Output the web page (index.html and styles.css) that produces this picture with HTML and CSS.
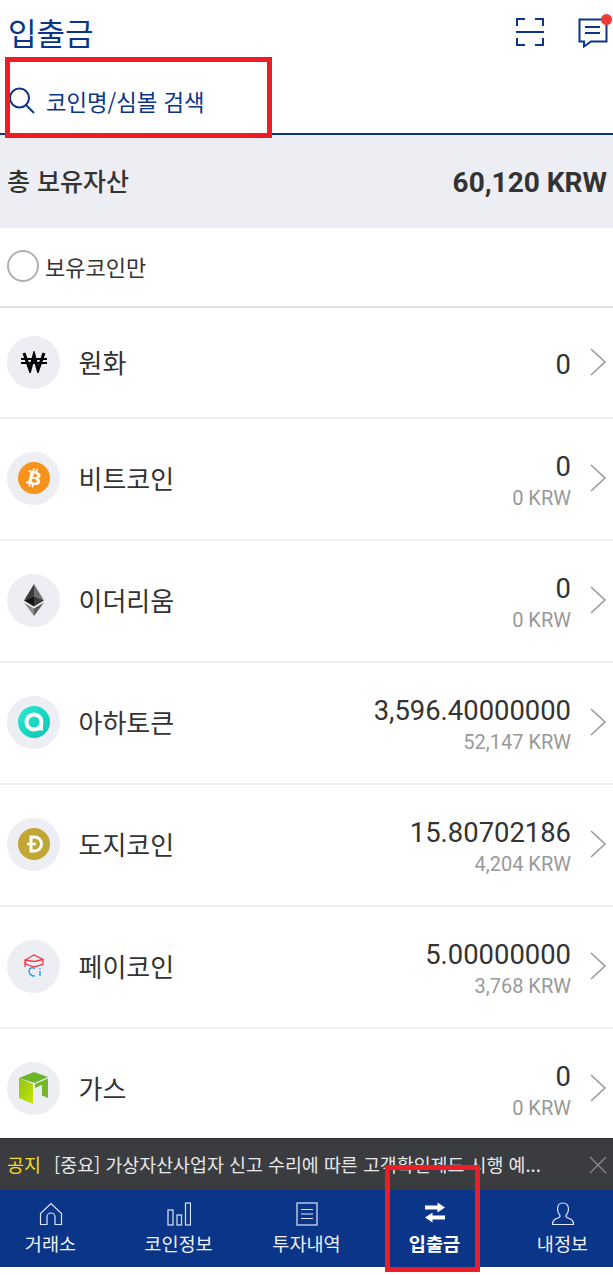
FILE: index.html
```html
<!DOCTYPE html>
<html lang="ko">
<head>
<meta charset="utf-8">
<title>입출금</title>
<link rel="stylesheet" href="styles.css">
</head>
<body>
<div class="app">
  <header class="top">
    <div class="titlebar">
      <h1 class="title">입출금</h1>
      <div class="top-icons">
        <svg class="ic-scan" width="28" height="28" viewBox="0 0 28 28" fill="none" stroke="#0a3589" stroke-width="2"><path d="M1 8V1h8M19 1h8v7M1 20v7h8M19 27h8v-7"/><path d="M0 14h28"/></svg>
        <span class="msg">
          <svg width="30" height="31" viewBox="0 0 30 31" fill="none" stroke="#0a3589" stroke-width="2"><path d="M1.500 2.500h27v22H13l-7 5v-5H1.500z"/><path d="M7 10h15M7 16h15"/></svg>
          <i class="dot"></i>
        </span>
      </div>
    </div>
    <div class="search">
      <svg width="28" height="28" viewBox="0 0 28 28" fill="none" stroke="#0a3589" stroke-width="2"><circle cx="11.500" cy="11" r="9.500"/><path d="M18 18l8 8"/></svg>
      <span class="search-text">코인명/심볼 검색</span>
    </div>
  </header>
  <section class="summary"><span class="sum-l">총 보유자산</span><span class="sum-r">60,120 KRW</span></section>
  <div class="filter"><i class="radio"></i><span>보유코인만</span></div>
  <main class="list">
    <div class="row first">
      <span class="coin"><svg width="28" height="22" viewBox="0 0 28 22" fill="none" stroke="#000" stroke-width="3"><path d="M4 2l6 17 4-15 4 15 6-17"/><path d="M1 8h26M1 12h26" stroke-width="2"/></svg></span>
      <span class="name">원화</span>
      <span class="vals"><b class="num">0</b></span>
      <svg class="chev" width="18" height="28" viewBox="0 0 18 28" fill="none" stroke="#999" stroke-width="1.600"><path d="M2 1l14 13L2 27"/></svg>
    </div>
    <div class="row">
      <span class="coin"><svg width="32" height="32" viewBox="0 0 32 32"><circle cx="16" cy="16" r="16" fill="#f7931a"/><path fill="#fff" d="M22.600 14c.3-2.100-1.300-3.200-3.400-4l.7-2.800-1.700-.4-.7 2.700-1.400-.3.700-2.700-1.700-.4-.7 2.800-3.400-.8-.5 1.800s1.300.3 1.200.3c.7.2.800.6.800 1l-1.900 7.600c-.1.200-.3.500-.8.400 0 0-1.200-.3-1.200-.3l-.9 2 3.300.8-.7 2.800 1.700.4.700-2.800 1.400.3-.7 2.800 1.700.4.700-2.800c2.900.5 5.100.3 6-2.300.7-2.100 0-3.300-1.500-4.100 1.100-.3 1.900-1 2.100-2.400zm-3.800 5.400c-.5 2.100-4 1-5.200.7l.9-3.700c1.200.3 4.800.9 4.300 3zm.5-5.400c-.5 1.900-3.400.9-4.300.7l.8-3.300c1 .2 4 .7 3.500 2.600z"/></svg></span>
      <span class="name">비트코인</span>
      <span class="vals"><b class="num">0</b><small class="krw">0 KRW</small></span>
      <svg class="chev" width="18" height="28" viewBox="0 0 18 28" fill="none" stroke="#999" stroke-width="1.600"><path d="M2 1l14 13L2 27"/></svg>
    </div>
    <div class="row">
      <span class="coin"><svg width="20" height="32" viewBox="0 0 20 32"><path fill="#3c3c3d" d="M10 0L0 16.500 10 12z"/><path fill="#6f6f70" d="M10 0l10 16.500L10 12z"/><path fill="#141414" d="M0 16.500L10 22.500V12z"/><path fill="#3c3c3d" d="M20 16.500L10 22.500V12z"/><path fill="#8c8c8d" d="M0 18.500L10 32v-7.500z"/><path fill="#5a5a5b" d="M20 18.500L10 32v-7.500z"/></svg></span>
      <span class="name">이더리움</span>
      <span class="vals"><b class="num">0</b><small class="krw">0 KRW</small></span>
      <svg class="chev" width="18" height="28" viewBox="0 0 18 28" fill="none" stroke="#999" stroke-width="1.600"><path d="M2 1l14 13L2 27"/></svg>
    </div>
    <div class="row">
      <span class="coin"><svg width="32" height="32" viewBox="0 0 32 32"><defs><linearGradient id="aha" x1="0" y1="0" x2="1" y2="1"><stop offset="0" stop-color="#2ce8d4"/><stop offset="1" stop-color="#0cc4b4"/></linearGradient></defs><circle cx="16" cy="16" r="16" fill="url(#aha)"/><circle cx="16" cy="16" r="7.500" fill="none" stroke="#fff" stroke-width="4"/><path d="M21 17h4v7.500h-4z" fill="#fff"/></svg></span>
      <span class="name">아하토큰</span>
      <span class="vals"><b class="num">3,596.40000000</b><small class="krw">52,147 KRW</small></span>
      <svg class="chev" width="18" height="28" viewBox="0 0 18 28" fill="none" stroke="#999" stroke-width="1.600"><path d="M2 1l14 13L2 27"/></svg>
    </div>
    <div class="row">
      <span class="coin"><svg width="32" height="32" viewBox="0 0 32 32"><circle cx="16" cy="16" r="16" fill="#c2a633"/><path fill="none" stroke="#fff" stroke-width="3" d="M13 9h3.500a7 7 0 010 14H13z"/><path stroke="#fff" stroke-width="2.500" d="M9 16h9"/></svg></span>
      <span class="name">도지코인</span>
      <span class="vals"><b class="num">15.80702186</b><small class="krw">4,204 KRW</small></span>
      <svg class="chev" width="18" height="28" viewBox="0 0 18 28" fill="none" stroke="#999" stroke-width="1.600"><path d="M2 1l14 13L2 27"/></svg>
    </div>
    <div class="row">
      <span class="coin"><svg width="22" height="24" viewBox="0 0 22 24" fill="none"><path stroke="#ee3b4b" stroke-width="1.300" d="M2 6l9-5 9 4.500v5l-9 2.500-8-3zM2 6v7M11 7.500L2 6M11 7.500l9-2"/><path stroke="#2a9df4" stroke-width="1.500" d="M12 14.500c-3-1.500-6-.5-6 2.500s3 5.500 6 5"/><path stroke="#2a9df4" stroke-width="1.500" d="M17 17v5"/><path stroke="#2a9df4" stroke-width="1.300" d="M17 14v1.500"/></svg></span>
      <span class="name">페이코인</span>
      <span class="vals"><b class="num">5.00000000</b><small class="krw">3,768 KRW</small></span>
      <svg class="chev" width="18" height="28" viewBox="0 0 18 28" fill="none" stroke="#999" stroke-width="1.600"><path d="M2 1l14 13L2 27"/></svg>
    </div>
    <div class="row">
      <span class="coin"><svg width="30" height="32" viewBox="0 0 30 32"><defs><linearGradient id="neo" x1="0" y1="0" x2="1" y2="1"><stop offset="0" stop-color="#8fc31f"/><stop offset="1" stop-color="#c8e400"/></linearGradient></defs><path fill="url(#neo)" d="M0 6l14 6v20L0 26z"/><path fill="#6db52a" d="M0 6L15 0l14 5-13.500 6z"/><path fill="#74b72a" d="M16 12l13-5.500V26l-6-2.500V13l-7 3z"/></svg></span>
      <span class="name">가스</span>
      <span class="vals"><b class="num">0</b><small class="krw">0 KRW</small></span>
      <svg class="chev" width="18" height="28" viewBox="0 0 18 28" fill="none" stroke="#999" stroke-width="1.600"><path d="M2 1l14 13L2 27"/></svg>
    </div>
  </main>
  <div class="notice">
    <span class="n-tag">공지</span>
    <span class="n-text">[중요] 가상자산사업자 신고 수리에 따른 고객확인제도 시행 예...</span>
    <svg width="18" height="18" viewBox="0 0 18 18" fill="none" stroke="#8a8c90" stroke-width="1.300"><path d="M1 1l16 16M17 1L1 17"/></svg>
  </div>
  <nav class="nav">
    <a class="tab"><svg width="24" height="24" viewBox="0 0 24 24" fill="none" stroke="#dfe5f3" stroke-width="1.200"><path d="M1.500 11.500L12 1.500l10.500 10V22.500H16V15a4 4 0 00-8 0v7.500H1.500z"/></svg><span>거래소</span></a>
    <a class="tab"><svg width="24" height="24" viewBox="0 0 24 24" fill="none" stroke="#dfe5f3" stroke-width="1.200"><rect x="1" y="8" width="5" height="15"/><rect x="10" y="13" width="4.500" height="10"/><rect x="18.500" y="1" width="5" height="22"/></svg><span>코인정보</span></a>
    <a class="tab"><svg width="24" height="24" viewBox="0 0 24 24" fill="none" stroke="#dfe5f3" stroke-width="1.200"><rect x="2" y="1" width="20" height="22"/><path d="M6 7.500h12M6 12h12M6 16.500h12"/></svg><span>투자내역</span></a>
    <a class="tab on"><svg width="24" height="24" viewBox="0 0 24 24" fill="#fff"><path d="M2 3.500h12.500V0.500L22 5.500l-7.500 5V7.500H2zM22 13.500H9.500v-3L2 15.500l7.500 5v-3H22z"/></svg><span>입출금</span></a>
    <a class="tab"><svg width="24" height="24" viewBox="0 0 24 24" fill="none" stroke="#dfe5f3" stroke-width="1.200"><path d="M12 1c-3.500 0-5.500 2.500-5.500 6s1.500 5 2.500 6.500c.5 1-.5 2-2 2.500C4 17 1.500 18 1.500 22.500h21c0-4.500-2.500-5.500-5.500-6.500-1.500-.5-2.500-1.500-2-2.500 1-1.500 2.500-3 2.500-6.500S15.500 1 12 1z"/></svg><span>내정보</span></a>
  </nav>
  <div class="foot"></div>
  <div class="mark mark-search"></div>
  <div class="mark mark-tab"></div>
</div>
</body>
</html>
```
FILE: styles.css
```css
* { box-sizing: border-box; }
html, body { margin: 0; padding: 0; height: 100%; }
body { background: #fff; font-family: Roboto, "Noto Sans CJK KR", sans-serif; color: #333; overflow: hidden; }
.app { position: relative; width: 613px; height: 1275px; display: flex; flex-direction: column; overflow: hidden; }
.top { height: 135px; flex: none; border-bottom: 2px solid #0a3589; }
.titlebar { height: 62px; display: flex; align-items: center; justify-content: space-between; padding: 1px 5px 0 8px; }
.title { margin: 0; font: 400 31px/1 "Noto Sans CJK KR", sans-serif; color: #0a3589; }
.top-icons { display: flex; align-items: center; gap: 34px; }
.msg { position: relative; display: block; height: 31px; margin-top: 2px; }
.msg svg, .ic-scan { display: block; }
.dot { position: absolute; top: -3px; right: -4px; width: 11px; height: 11px; border-radius: 50%; background: #ee3b33; }
.search { height: 71px; display: flex; align-items: center; gap: 10px; padding: 7px 0 0 8px; }
.search-text { font: 400 22.3px/1 "Noto Sans CJK KR", sans-serif; color: #0a3589; }
.summary { height: 93px; flex: none; background: #edeef3; display: flex; align-items: center; justify-content: space-between; padding: 0 6px 0 7px; font-weight: 700; font-size: 28px; color: #333; }
.sum-l { font: 500 25px/1 "Noto Sans CJK KR", sans-serif; margin-top: -2px; }
.sum-r { font-weight: 700; margin-top: 2px; }
.filter { height: 80px; flex: none; display: flex; align-items: center; gap: 6px; padding: 0 0 3px 7px; border-bottom: 2px solid #e2e2e4; font: 400 22px/1 "Noto Sans CJK KR", sans-serif; color: #333; }
.radio { width: 32px; height: 32px; border-radius: 50%; border: 2px solid #b0b0b0; background: #fff; }
.list { flex: 1 1 0; min-height: 0; overflow: hidden; }
.row { height: 122px; display: flex; align-items: center; padding: 0 6px 2px 7px; border-bottom: 2px solid #efeff1; }
.row.first { height: 111px; padding-bottom: 1px; }
.coin { width: 53px; height: 53px; flex: none; border-radius: 50%; background: #edeef3; display: flex; align-items: center; justify-content: center; }
.name { margin-left: 18.5px; font: 400 26px/1 "Noto Sans CJK KR", sans-serif; color: #333; flex: 1; }
.vals { display: flex; flex-direction: column; align-items: flex-end; padding-top: 5px; }
.num { font-weight: 400; font-size: 27.4px; line-height: 32px; color: #333; }
.krw { font-size: 20px; line-height: 24px; color: #999; margin-top: 3px; }
.chev { margin-left: 18px; flex: none; }
.notice { height: 52px; flex: none; background: #3a3c40; display: flex; align-items: center; padding: 0 6px 0 7px; font: 400 18.4px/1 "Noto Sans CJK KR", sans-serif; color: #e8e8e8; border-top: 1px solid #2e3034; }
.n-tag { color: #f5dc14; width: 47px; flex: none; }
.n-text { flex: 1; white-space: nowrap; }
.nav { height: 77px; flex: none; background: #0a3589; display: grid; grid-template-columns: repeat(5, 128px); justify-content: center; overflow: hidden; }
.tab { display: flex; flex-direction: column; align-items: center; padding-top: 12px; gap: 4px; color: #eef1f8; font: 400 18.6px/26px "Noto Sans CJK KR", sans-serif; }
.tab svg { display: block; }
.tab.on { color: #fff; font-weight: 700; }
.foot { height: 8px; flex: none; background: #fff; }
.mark { position: absolute; border: 5px solid #ee1c25; pointer-events: none; }
.mark-search { left: 5px; top: 57px; width: 267px; height: 81px; }
.mark-tab { left: 385px; top: 1165px; width: 95px; height: 107px; }
```
